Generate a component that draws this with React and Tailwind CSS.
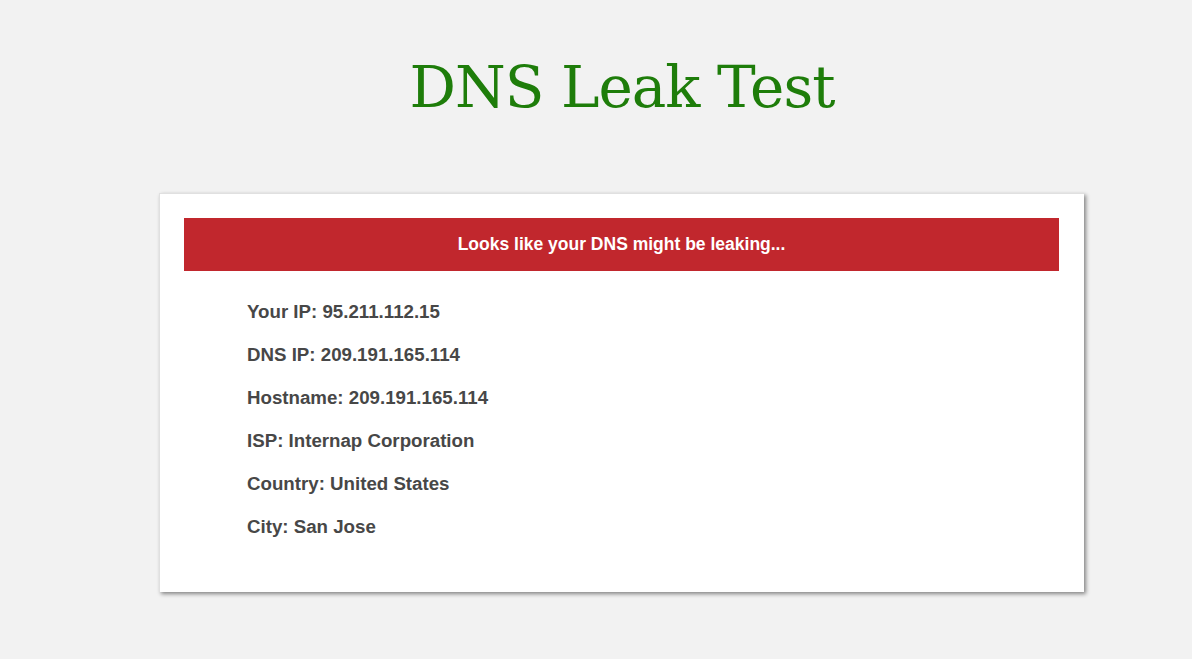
export default function App() {
  const rows = [
    ["Your IP", "95.211.112.15"],
    ["DNS IP", "209.191.165.114"],
    ["Hostname", "209.191.165.114"],
    ["ISP", "Internap Corporation"],
    ["Country", "United States"],
    ["City", "San Jose"],
  ];

  return (
    <div className="min-h-[659px] w-full bg-[#f2f2f2] font-['Liberation_Sans',Arial,sans-serif]">
      {/* Title */}
      <h1 className="pt-[46px] text-center font-['DejaVu_Serif',serif] text-[58px] leading-[82px] text-[#1e7d0a] tracking-[-1px] pl-[52px]">
        DNS Leak Test
      </h1>

      {/* Result card */}
      <div className="mt-[65px] ml-[159px] w-[925px] h-[399px] bg-white border-t border-l border-[#e0e0e0] shadow-[2px_2px_4px_rgba(0,0,0,0.45)] pl-[24px] pr-[25px] pt-[24px]">
        <div className="h-[53px] bg-[#c1272d] flex items-center justify-center text-white font-bold text-[17.5px]">
          Looks like your DNS might be leaking...
        </div>

        <div className="pl-[63px] pt-[30px] flex flex-col gap-[21px]">
          {rows.map(([label, value]) => (
            <p key={label} className="text-[18.7px] leading-[22px] font-bold text-[#474747]">
              {label}: {value}
            </p>
          ))}
        </div>
      </div>
    </div>
  );
}
